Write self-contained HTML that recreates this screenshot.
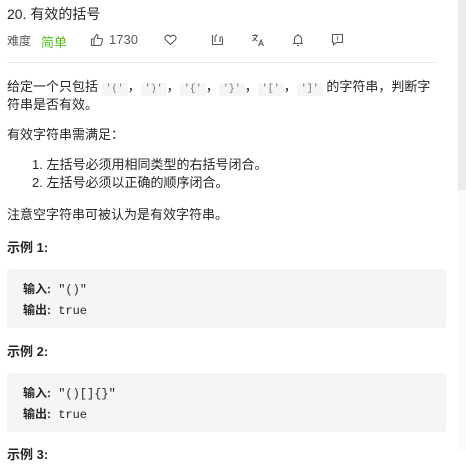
<!DOCTYPE html>
<html><head><meta charset="utf-8"><style>
*{margin:0;padding:0;box-sizing:border-box}
body{width:466px;height:450px;overflow:hidden;background:#fff;font-family:"Liberation Sans","Noto Sans CJK SC",sans-serif;color:#262626;font-size:13px;position:relative}
.sb{position:absolute;left:458px;top:0;width:8px;height:450px;background:#fafafa}
.sb i{position:absolute;left:0;top:0;width:8px;height:190px;background:#ececec}
.t{position:absolute;left:7px;top:4px;font-size:14px;color:#262626}
.meta{position:absolute;left:7px;top:32px;font-size:13px;color:#595959;height:16px}
.meta span{position:absolute;white-space:nowrap}
.hr{position:absolute;left:7px;top:62px;width:429px;height:1px;background:#e5e5e5}
.p{position:absolute;left:7px;white-space:nowrap;line-height:18px}
code{font-family:"Liberation Mono",monospace;font-size:10px;background:#f5f5f5;color:#777;padding:1px 4px;border-radius:2px}
.b{font-weight:bold}
.pre{position:absolute;left:7px;width:439px;height:59px;background:#f5f5f5;border-radius:3px;padding:10px 16px;line-height:20px;font-size:12px;font-family:"Liberation Mono","Noto Sans CJK SC",monospace;color:#262626}
.pre b{font-family:"Liberation Sans","Noto Sans CJK SC",sans-serif}
svg{position:absolute}
</style></head><body>
<div class="sb"><i></i></div>
<div class="t">20. 有效的括号</div>
<div class="meta">
<span style="left:0;top:0;font-size:12px">难度</span>
<span style="left:34px;top:0;color:#52c41a">简单</span>
<svg style="left:83px;top:1px" width="14" height="14" viewBox="0 0 14 14" fill="none" stroke="#595959" stroke-width="1.1"><path d="M1.5 6h2.5v6.5H1.5zM4 6l2.5-4.5c1 0 1.6.7 1.4 1.7L7.5 5.5h4c.7 0 1.2.6 1 1.3l-1.2 4.8c-.2.6-.6.9-1.2.9H4"/></svg>
<span style="left:102px;top:0">1730</span>
<svg style="left:157px;top:2px" width="13" height="12" viewBox="0 0 13 12" fill="none" stroke="#595959" stroke-width="1.1"><path d="M6.5 10.5L1.8 6C.5 4.7.7 2.5 2.3 1.6 3.7.9 5.4 1.3 6.5 2.8 7.6 1.3 9.3.9 10.7 1.6c1.6.9 1.8 3.1.5 4.4z"/></svg>
<svg style="left:204px;top:1px" width="13" height="13" viewBox="0 0 13 13" fill="none" stroke="#595959" stroke-width="1.1"><path d="M1.5 2v9.5h10V5M4 4v5M4 4l2-2.5M9 4h3M9 9V4"/></svg>
<svg style="left:244px;top:1px" width="14" height="14" viewBox="0 0 14 14" fill="none" stroke="#595959" stroke-width="1"><path d="M1 2.5h6M4 1v1.5M6 2.5C5 5.5 3.5 7 1.5 8M2.5 4.5c1 1.5 2.5 3 4 3.5M7.5 13l2.5-6 2.5 6M8.5 11h3"/></svg>
<svg style="left:285px;top:1px" width="12" height="14" viewBox="0 0 12 14" fill="none" stroke="#595959" stroke-width="1.1"><path d="M2.5 10.5V6a3.5 3.5 0 0 1 7 0v4.5M1 10.5h10M5 12.5h2M6 1v1"/></svg>
<svg style="left:324px;top:1px" width="13" height="13" viewBox="0 0 13 13" fill="none" stroke="#595959" stroke-width="1.1"><path d="M1.5 1.5h10v8h-6l-3 2.5v-2.5h-1zM6.5 3.5v3M6.5 7.5v.8"/></svg>
</div>
<div class="hr"></div>
<div class="p" style="top:78px">给定一个只包括 <code>'('</code>，<code>')'</code>，<code>'{'</code>，<code>'}'</code>，<code>'['</code>，<code>']'</code> 的字符串，判断字</div>
<div class="p" style="top:96px">符串是否有效。</div>
<div class="p" style="top:126px">有效字符串需满足：</div>
<div class="p" style="top:156px;left:32px">1. 左括号必须用相同类型的右括号闭合。</div>
<div class="p" style="top:174px;left:32px">2. 左括号必须以正确的顺序闭合。</div>
<div class="p" style="top:206px">注意空字符串可被认为是有效字符串。</div>
<div class="p b" style="top:239px">示例 1:</div>
<div class="pre" style="top:269px"><b>输入:</b> "()"<br><b>输出:</b> true</div>
<div class="p b" style="top:343px">示例 2:</div>
<div class="pre" style="top:373px"><b>输入:</b> "()[]{}"<br><b>输出:</b> true</div>
<div class="p b" style="top:446px">示例 3:</div>
</body></html>
